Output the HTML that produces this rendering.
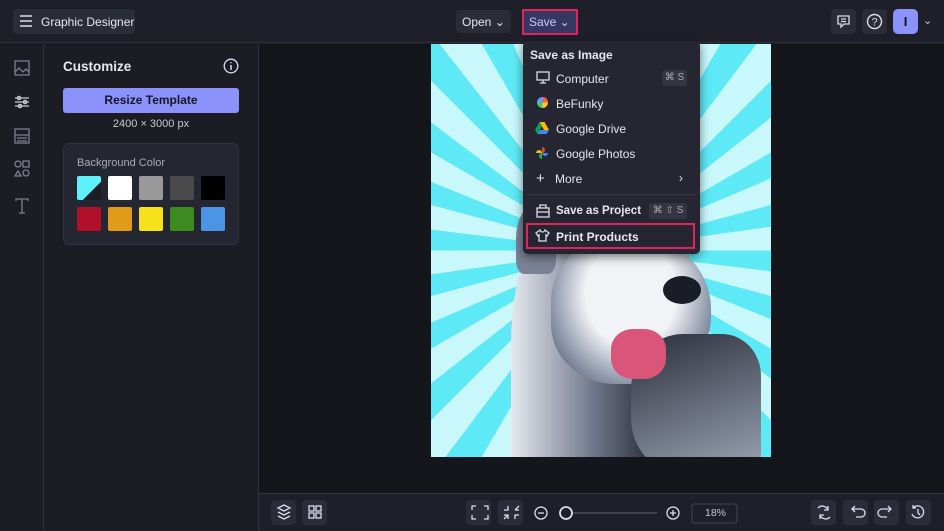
<!DOCTYPE html><html><head><style>
*{box-sizing:border-box;margin:0;padding:0}
body{width:944px;height:531px;overflow:hidden;background:#1b1c24;font-family:"Liberation Sans",sans-serif;color:#e6e7ee;position:relative}
.abs{position:absolute}
.btn{position:absolute;background:#2a2c37;border-radius:4px}
svg{display:block}
</style></head><body>
<div class="abs" style="left:0;top:0;width:944px;height:43px;background:#1e1f28;border-bottom:1px solid #30323d"></div>
<div class="btn" style="left:13px;top:9px;width:122px;height:25px"></div>
<svg class="abs" style="left:19px;top:15px" width="14" height="12"><path d="M1 1h12M1 6h12M1 11h12" stroke="#dde" stroke-width="1.6"/></svg>
<div class="abs" style="left:41px;top:15px;font-size:12px">Graphic Designer</div>
<div class="btn" style="left:456px;top:10px;width:55px;height:23px"></div>
<div class="abs" style="left:462px;top:15px;font-size:12px">Open ⌄</div>
<div class="abs" style="left:522px;top:9px;width:56px;height:26px;background:#363862;border:2px solid #e0245e"></div>
<div class="abs" style="left:529px;top:15px;font-size:12px;color:#c9cbff">Save ⌄</div>
<div class="btn" style="left:831px;top:9px;width:25px;height:25px"></div>
<svg class="abs" style="left:836px;top:14px" width="15" height="15"><path d="M2 2h11v8H8l-3 3v-3H2z M5 5h5M5 7.5h5" fill="none" stroke="#dde" stroke-width="1.3"/></svg>
<div class="btn" style="left:862px;top:9px;width:25px;height:25px"></div>
<svg class="abs" style="left:866px;top:13px" width="17" height="17"><circle cx="8.5" cy="8.5" r="7" fill="none" stroke="#dde" stroke-width="1.4"/><text x="8.5" y="12.5" font-size="11" text-anchor="middle" fill="#dde" font-family="Liberation Sans">?</text></svg>
<div class="abs" style="left:893px;top:9px;width:25px;height:25px;border-radius:5px;background:#8b93fb;color:#111;font-size:13px;font-weight:bold;text-align:center;line-height:25px">I</div>
<div class="abs" style="left:923px;top:14px;font-size:11px;color:#ccd">⌄</div>
<!-- rail -->
<div class="abs" style="left:43px;top:44px;width:1px;height:487px;background:#30323d"></div>
<svg class="abs" style="left:14px;top:60px" width="16" height="160" fill="none" stroke="#7d8090" stroke-width="1.3"><rect x="1" y="1" width="14" height="14"/><path d="M1 12l4-4 4 4 3-3 3 3"/><path d="M1 38h14M1 42h14M1 46h14" stroke="#c8cad6"/><circle cx="5" cy="38" r="1.6" stroke="#c8cad6"/><circle cx="11" cy="42" r="1.6" stroke="#c8cad6"/><circle cx="6" cy="46" r="1.6" stroke="#c8cad6"/><rect x="1" y="69" width="14" height="14"/><path d="M1 75h14M3 78h10M3 81h10"/><circle cx="4" cy="104" r="3"/><rect x="9" y="101" width="6" height="6"/><path d="M1 116l3-5 3 5z"/><circle cx="12" cy="113" r="3"/><path d="M2 141v-2h12v2M8 139v14M5 153h6"/></svg>
<!-- panel -->
<div class="abs" style="left:258px;top:44px;width:1px;height:487px;background:#30323d"></div>
<div class="abs" style="left:63px;top:59px;font-size:13.5px;font-weight:bold">Customize</div>
<svg class="abs" style="left:223px;top:58px" width="16" height="16"><circle cx="8" cy="8" r="6.8" fill="none" stroke="#dde" stroke-width="1.3"/><path d="M8 7v5M8 4.3v1" stroke="#dde" stroke-width="1.5"/></svg>
<div class="abs" style="left:63px;top:88px;width:176px;height:25px;background:#8b93fb;border-radius:3px;color:#141627;font-size:12px;font-weight:bold;text-align:center;line-height:25px">Resize Template</div>
<div class="abs" style="left:63px;top:118px;width:176px;text-align:center;font-size:11px;color:#c8c9d3">2400 × 3000 px</div>
<div class="abs" style="left:63px;top:143px;width:176px;height:102px;background:#242631;border:1px solid #2f313c;border-radius:6px"></div>
<div class="abs" style="left:77px;top:157px;font-size:11px;color:#a9abb8">Background Color</div>
<div class="abs" style="left:77px;top:176px;width:24px;height:24px;border-radius:2px;background:linear-gradient(135deg,#5ef0fb 62%,#1b1c24 62%)"></div>
<div class="abs" style="left:108px;top:176px;width:24px;height:24px;border-radius:2px;background:#fff"></div>
<div class="abs" style="left:139px;top:176px;width:24px;height:24px;border-radius:2px;background:#999"></div>
<div class="abs" style="left:170px;top:176px;width:24px;height:24px;border-radius:2px;background:#4a4a4a"></div>
<div class="abs" style="left:201px;top:176px;width:24px;height:24px;border-radius:2px;background:#000"></div>
<div class="abs" style="left:77px;top:207px;width:24px;height:24px;border-radius:2px;background:#b0102a"></div>
<div class="abs" style="left:108px;top:207px;width:24px;height:24px;border-radius:2px;background:#e09b18"></div>
<div class="abs" style="left:139px;top:207px;width:24px;height:24px;border-radius:2px;background:#f7e11c"></div>
<div class="abs" style="left:170px;top:207px;width:24px;height:24px;border-radius:2px;background:#3d8a1e"></div>
<div class="abs" style="left:201px;top:207px;width:24px;height:24px;border-radius:2px;background:#4a95e6"></div>
<!-- canvas -->
<div class="abs" style="left:259px;top:44px;width:685px;height:449px;background:#15161c"></div>
<div class="abs" style="left:431px;top:44px;width:340px;height:413px;overflow:hidden;background:repeating-conic-gradient(from 0deg at 50% 50%,#5ee9f6 0deg 7deg,#c8f8fc 7deg 15deg)">
 <div class="abs" style="left:80px;top:150px;width:140px;height:300px;border-radius:50% 40% 10% 10%;background:linear-gradient(90deg,#e6e9ef,#6d7588 60%,#2a2f3c)"></div>
 <div class="abs" style="left:120px;top:190px;width:160px;height:150px;border-radius:45% 50% 45% 40%;background:radial-gradient(ellipse at 50% 40%,#f2f3f6 0 40%,#8d97aa 70%,#3a4150)"></div>
 <div class="abs" style="left:200px;top:290px;width:130px;height:140px;border-radius:40% 30% 10% 40%;background:linear-gradient(160deg,#2a2f3c,#9ca4b4)"></div>
 <div class="abs" style="left:180px;top:285px;width:55px;height:50px;border-radius:40%;background:#d9557a"></div>
 <div class="abs" style="left:232px;top:232px;width:38px;height:28px;border-radius:50%;background:#1a1d26"></div>
 <div class="abs" style="left:85px;top:160px;width:40px;height:70px;border-radius:50% 50% 20% 20%;background:#7a8296"></div>
</div>
<!-- bottom bar -->
<div class="abs" style="left:259px;top:493px;width:685px;height:38px;background:#1e1f28;border-top:1px solid #30323d"></div>
<div class="btn" style="left:271px;top:500px;width:25px;height:25px"></div>
<div class="btn" style="left:302px;top:500px;width:25px;height:25px"></div>
<div class="btn" style="left:466px;top:500px;width:25px;height:25px"></div>
<div class="btn" style="left:498px;top:500px;width:25px;height:25px"></div>
<div class="btn" style="left:811px;top:500px;width:25px;height:25px"></div>
<div class="btn" style="left:843px;top:500px;width:25px;height:25px"></div>
<div class="btn" style="left:874px;top:500px;width:25px;height:25px"></div>
<div class="btn" style="left:906px;top:500px;width:25px;height:25px"></div>
<svg class="abs" style="left:259px;top:493px" width="685" height="38" fill="none" stroke="#dde" stroke-width="1.3">
<path d="M19 15l6-3 6 3-6 3zM19 19l6 3 6-3M19 23l6 3 6-3"/>
<rect x="50" y="13" width="5" height="5"/><rect x="57" y="13" width="5" height="5"/><rect x="50" y="20" width="5" height="5"/><rect x="57" y="20" width="5" height="5"/>
<path d="M213 17v-4h4M225 13h4v4M229 22v4h-4M217 26h-4v-4"/>
<path d="M249 13v4h-4M256 17h4M256 17l4-4M245 22h4v4M249 22l-4 4M256 26v-4h4"/>
<circle cx="282" cy="20" r="6"/><path d="M279 20h6"/>
<path d="M313 20h85" stroke="#555866"/><circle cx="307" cy="20" r="6" stroke-width="1.8" fill="#1e1f28"/>
<circle cx="414" cy="20" r="6"/><path d="M411 20h6M414 17v6"/>
<rect x="433" y="11" width="45" height="19" rx="3" stroke="#3a3c48"/>
<path d="M559 15a6 6 0 0 1 10 2M571 24a6 6 0 0 1-10-2M569 13v4h-4M561 26v-4h4"/>
<path d="M593 16h9a4 4 0 0 1 0 8h-5M596 13l-3 3 3 3"/>
<path d="M632 16h-9a4 4 0 0 0 0 8h5M629 13l3 3-3 3"/>
<path d="M654 15a6 6 0 1 1-1 6M654 12v3h3M659 16v4l2 2"/>
</svg>
<div class="abs" style="left:705px;top:507px;font-size:10.5px;color:#c8c9d3">18%</div>
<!-- dropdown -->
<div class="abs" style="left:523px;top:41px;width:177px;height:213px;background:#252631;border-radius:5px;box-shadow:0 3px 10px rgba(0,0,0,.5)"></div>
<div class="abs" style="left:530px;top:48px;font-size:12px;font-weight:bold">Save as Image</div>
<svg class="abs" style="left:536px;top:71px" width="14" height="14" fill="none" stroke="#dde" stroke-width="1.3"><rect x="1" y="1" width="12" height="8"/><path d="M4 12h6M7 9v3"/></svg>
<div class="abs" style="left:556px;top:72px;font-size:12px">Computer</div>
<div class="abs" style="left:662px;top:70px;width:25px;height:16px;background:#333542;border-radius:3px;font-size:10px;color:#aaa;text-align:center;line-height:16px">⌘ S</div>
<div class="abs" style="left:537px;top:97px;width:11px;height:11px;border-radius:50%;background:conic-gradient(#e64 0 25%,#fc3 0 50%,#4c6 0 75%,#69f 0)"></div>
<div class="abs" style="left:556px;top:97px;font-size:12px">BeFunky</div>
<svg class="abs" style="left:535px;top:122px" width="14" height="12"><path d="M4.5 0h5l4.5 8h-5z" fill="#fbbc04"/><path d="M4.5 0L0 8l2.5 4 4.5-8z" fill="#0f9d58"/><path d="M2.5 12h9l2.5-4H5z" fill="#4285f4"/></svg>
<div class="abs" style="left:556px;top:122px;font-size:12px">Google Drive</div>
<svg class="abs" style="left:535px;top:146px" width="14" height="14"><path d="M7 7V1a3 3 0 0 1 0 6z" fill="#ea4335"/><path d="M7 7h6a3 3 0 0 1-6 0z" fill="#4285f4"/><path d="M7 7v6a3 3 0 0 1 0-6z" fill="#34a853"/><path d="M7 7H1a3 3 0 0 1 6 0z" fill="#fbbc04"/></svg>
<div class="abs" style="left:556px;top:147px;font-size:12px">Google Photos</div>
<div class="abs" style="left:536px;top:170px;font-size:15px">+</div>
<div class="abs" style="left:555px;top:172px;font-size:12px">More</div>
<div class="abs" style="left:679px;top:171px;font-size:12px">›</div>
<div class="abs" style="left:527px;top:194px;width:169px;height:1px;background:#3a3c48"></div>
<svg class="abs" style="left:536px;top:204px" width="14" height="14" fill="none" stroke="#dde" stroke-width="1.3"><rect x="1" y="4" width="12" height="9"/><path d="M4 4V1h6v3M1 8h12"/></svg>
<div class="abs" style="left:556px;top:205px;font-size:11.5px;font-weight:bold">Save as Project</div>
<div class="abs" style="left:649px;top:203px;width:38px;height:16px;background:#333542;border-radius:3px;font-size:10px;color:#aaa;text-align:center;line-height:16px">⌘ ⇧ S</div>
<div class="abs" style="left:526px;top:223px;width:169px;height:26px;border:2px solid #e0245e"></div>
<svg class="abs" style="left:535px;top:229px" width="15" height="13" fill="none" stroke="#dde" stroke-width="1.3"><path d="M5 1L1 4l2 3 1-1v6h7V6l1 1 2-3-4-3a2.5 2 0 0 1-5 0z"/></svg>
<div class="abs" style="left:556px;top:230px;font-size:12px;font-weight:bold">Print Products</div>
</body></html>
